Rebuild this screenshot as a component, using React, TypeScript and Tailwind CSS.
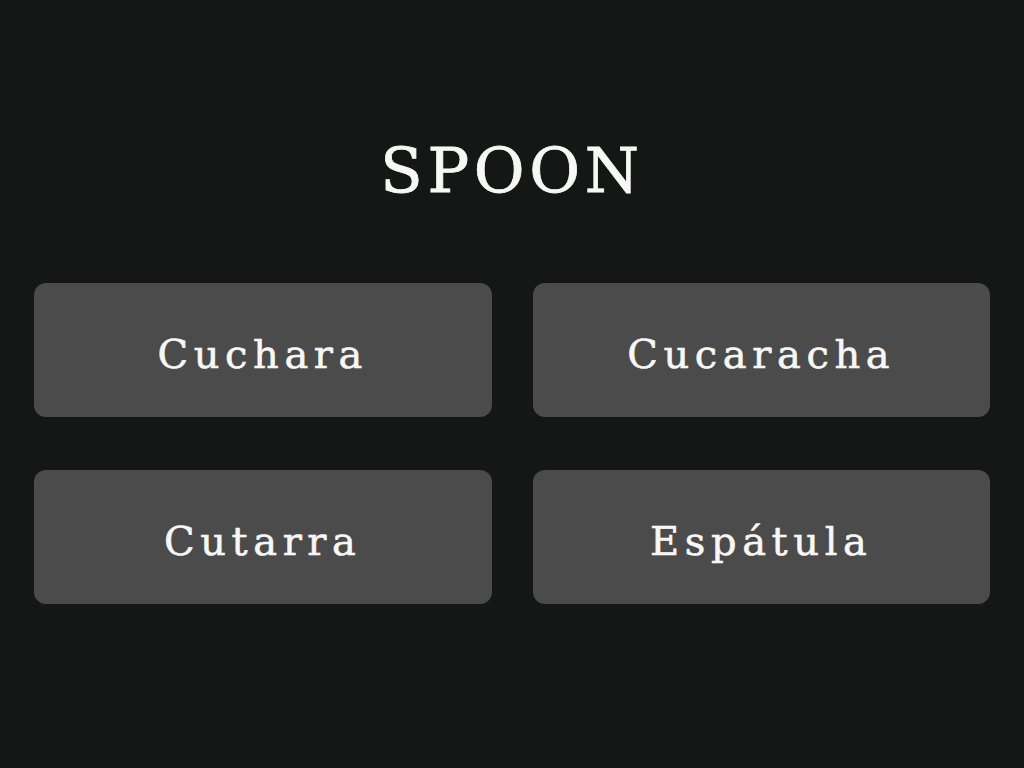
const options = ["Cuchara", "Cucaracha", "Cutarra", "Espátula"];

export default function App() {
  return (
    <div
      className="flex h-[768px] w-[1024px] flex-col items-center bg-[#151716] text-[#f7f7f5]"
      style={{ fontFamily: '"DejaVu Serif", "Liberation Serif", serif' }}
    >
      <h1 className="mt-[134px] h-[74px] text-[62px] leading-[74px] tracking-[0.075em] [-webkit-text-stroke:0.8px_#f7f7f5]">
        SPOON
      </h1>
      <div className="mt-[75px] grid w-full grid-cols-2 gap-x-[41px] gap-y-[53px] px-[34px]">
        {options.map((label) => (
          <button
            key={label}
            type="button"
            className="flex h-[134px] items-center justify-center rounded-[12px] bg-[#4b4b4b] pt-[8px] text-[40px] tracking-[0.14em] text-[#f7f7f5] [-webkit-text-stroke:0.6px_#f7f7f5]"
          >
            {label}
          </button>
        ))}
      </div>
    </div>
  );
}
